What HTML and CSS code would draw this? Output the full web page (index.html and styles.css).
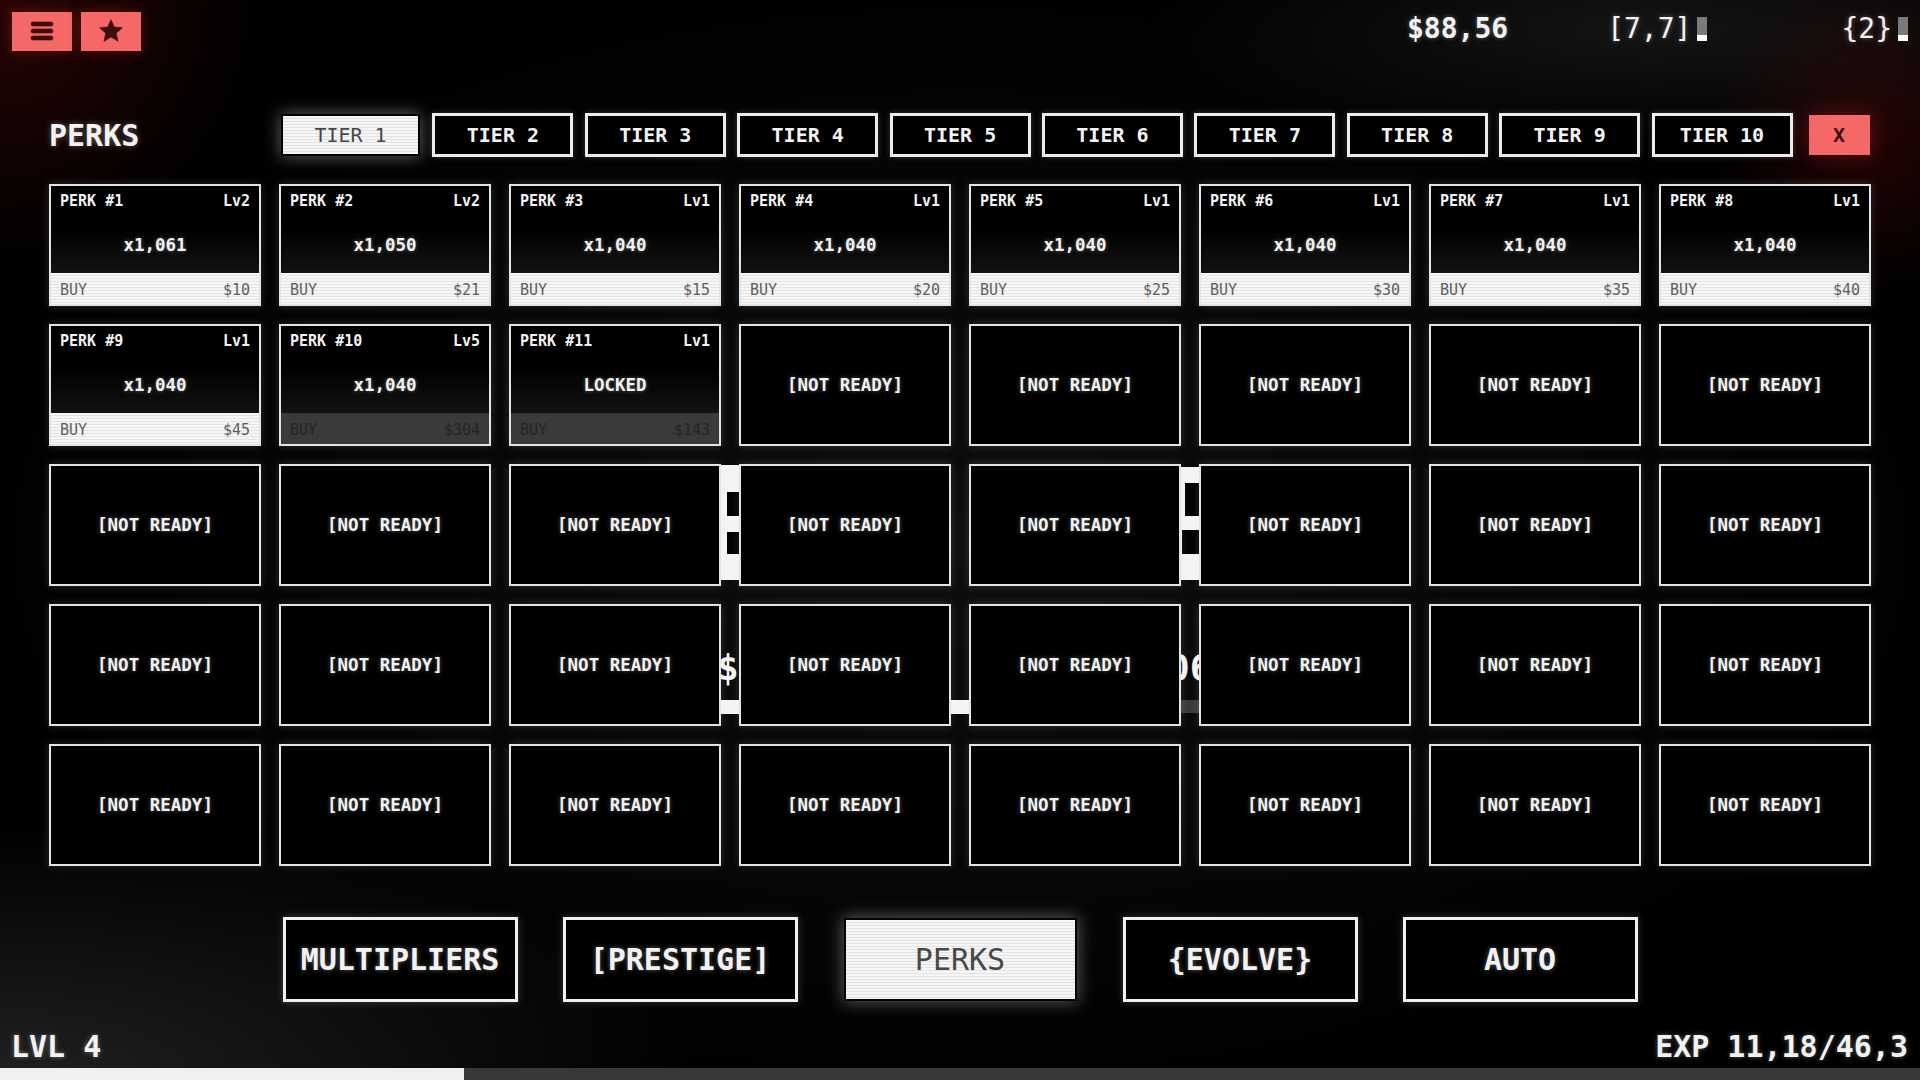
FILE: index.html
```html
<!doctype html>
<html lang="en">
<head>
  <meta charset="UTF-8">
  <title>Perks</title>
  <link rel="stylesheet" href="styles.css">
</head>
<body>
<div class="top">
  <a href="#" class="red-btn">
    <svg width="24" height="20" viewBox="0 0 24 20"><rect x="1" y="1" width="22" height="4" rx="2"/><rect x="1" y="8" width="22" height="4" rx="2"/><rect x="1" y="15" width="22" height="4" rx="2"/></svg>
  </a>
  <a href="#" class="red-btn">
    <svg width="26" height="26" viewBox="0 0 24 24"><polygon points="12,1.5 15,8.4 22.5,9.1 16.8,14 18.5,21.5 12,17.6 5.5,21.5 7.2,14 1.5,9.1 9,8.4" stroke-linejoin="round"/></svg>
  </a>
  <div class="stats">
    <span class="money">$88,56</span>
    <span class="pos">[7,7]<i class="caret"></i></span>
    <span class="ver">{2}<i class="caret"></i></span>
  </div>
</div>

<div class="head">
  <div class="title">PERKS</div>
  <div class="tabs">
    <a href="#" class="tab on">TIER 1</a>
    <a href="#" class="tab">TIER 2</a>
    <a href="#" class="tab">TIER 3</a>
    <a href="#" class="tab">TIER 4</a>
    <a href="#" class="tab">TIER 5</a>
    <a href="#" class="tab">TIER 6</a>
    <a href="#" class="tab">TIER 7</a>
    <a href="#" class="tab">TIER 8</a>
    <a href="#" class="tab">TIER 9</a>
    <a href="#" class="tab">TIER 10</a>
  </div>
  <a href="#" class="close">X</a>
</div>

<div class="grid-wrap">
  <!-- glitch leftovers of the previous frame showing between cards -->
  <div class="ghost g1"><i class="n1"></i><i class="n2"></i></div>
  <div class="ghost g2"><i class="n1"></i><i class="n2"></i></div>
  <div class="ghost-txt t1">$</div>
  <div class="ghost-txt t2">06</div>
  <div class="ghost b1"></div>
  <div class="ghost b2"></div>
  <div class="ghost b3"></div>

  <div class="grid">
    <div class="perk">
      <div class="perk-top"><span>PERK #1</span><span>Lv2</span></div>
      <div class="perk-val">x1,061</div>
      <div class="buy"><span>BUY</span><span>$10</span></div>
    </div>
    <div class="perk">
      <div class="perk-top"><span>PERK #2</span><span>Lv2</span></div>
      <div class="perk-val">x1,050</div>
      <div class="buy"><span>BUY</span><span>$21</span></div>
    </div>
    <div class="perk">
      <div class="perk-top"><span>PERK #3</span><span>Lv1</span></div>
      <div class="perk-val">x1,040</div>
      <div class="buy"><span>BUY</span><span>$15</span></div>
    </div>
    <div class="perk">
      <div class="perk-top"><span>PERK #4</span><span>Lv1</span></div>
      <div class="perk-val">x1,040</div>
      <div class="buy"><span>BUY</span><span>$20</span></div>
    </div>
    <div class="perk">
      <div class="perk-top"><span>PERK #5</span><span>Lv1</span></div>
      <div class="perk-val">x1,040</div>
      <div class="buy"><span>BUY</span><span>$25</span></div>
    </div>
    <div class="perk">
      <div class="perk-top"><span>PERK #6</span><span>Lv1</span></div>
      <div class="perk-val">x1,040</div>
      <div class="buy"><span>BUY</span><span>$30</span></div>
    </div>
    <div class="perk">
      <div class="perk-top"><span>PERK #7</span><span>Lv1</span></div>
      <div class="perk-val">x1,040</div>
      <div class="buy"><span>BUY</span><span>$35</span></div>
    </div>
    <div class="perk">
      <div class="perk-top"><span>PERK #8</span><span>Lv1</span></div>
      <div class="perk-val">x1,040</div>
      <div class="buy"><span>BUY</span><span>$40</span></div>
    </div>

    <div class="perk">
      <div class="perk-top"><span>PERK #9</span><span>Lv1</span></div>
      <div class="perk-val">x1,040</div>
      <div class="buy"><span>BUY</span><span>$45</span></div>
    </div>
    <div class="perk">
      <div class="perk-top"><span>PERK #10</span><span>Lv5</span></div>
      <div class="perk-val">x1,040</div>
      <div class="buy off"><span>BUY</span><span>$304</span></div>
    </div>
    <div class="perk">
      <div class="perk-top"><span>PERK #11</span><span>Lv1</span></div>
      <div class="perk-val">LOCKED</div>
      <div class="buy off"><span>BUY</span><span>$143</span></div>
    </div>
    <div class="perk empty">[NOT READY]</div>
    <div class="perk empty">[NOT READY]</div>
    <div class="perk empty">[NOT READY]</div>
    <div class="perk empty">[NOT READY]</div>
    <div class="perk empty">[NOT READY]</div>

    <div class="perk empty">[NOT READY]</div>
    <div class="perk empty">[NOT READY]</div>
    <div class="perk empty">[NOT READY]</div>
    <div class="perk empty">[NOT READY]</div>
    <div class="perk empty">[NOT READY]</div>
    <div class="perk empty">[NOT READY]</div>
    <div class="perk empty">[NOT READY]</div>
    <div class="perk empty">[NOT READY]</div>

    <div class="perk empty">[NOT READY]</div>
    <div class="perk empty">[NOT READY]</div>
    <div class="perk empty">[NOT READY]</div>
    <div class="perk empty">[NOT READY]</div>
    <div class="perk empty">[NOT READY]</div>
    <div class="perk empty">[NOT READY]</div>
    <div class="perk empty">[NOT READY]</div>
    <div class="perk empty">[NOT READY]</div>

    <div class="perk empty">[NOT READY]</div>
    <div class="perk empty">[NOT READY]</div>
    <div class="perk empty">[NOT READY]</div>
    <div class="perk empty">[NOT READY]</div>
    <div class="perk empty">[NOT READY]</div>
    <div class="perk empty">[NOT READY]</div>
    <div class="perk empty">[NOT READY]</div>
    <div class="perk empty">[NOT READY]</div>
  </div>
</div>

<div class="nav">
  <a href="#" class="nav-btn">MULTIPLIERS</a>
  <a href="#" class="nav-btn">[PRESTIGE]</a>
  <a href="#" class="nav-btn on">PERKS</a>
  <a href="#" class="nav-btn">{EVOLVE}</a>
  <a href="#" class="nav-btn">AUTO</a>
</div>

<div class="foot">
  <span>LVL 4</span>
  <span>EXP 11,18/46,3</span>
</div>
<div class="bar"><span style="width:24.15%"></span></div>
</body>
</html>
```

FILE: styles.css
```css
body {
  margin: 0;
  width: 1920px;
  height: 1080px;
  overflow: hidden;
  display: flex;
  flex-direction: column;
  font-family: "DejaVu Sans Mono", "Liberation Mono", monospace;
  color: #f2f2f2;
  background:
    radial-gradient(circle at 0 0, rgba(90, 10, 10, 0.45), transparent 260px),
    radial-gradient(circle at 1870px 135px, rgba(80, 8, 8, 0.45), transparent 160px),
    radial-gradient(ellipse 700px 260px at 0 100%, rgba(70, 70, 70, 0.45), transparent),
    radial-gradient(ellipse 500px 120px at 1650px 30px, rgba(40, 40, 40, 0.5), transparent),
    radial-gradient(ellipse at 50% 50%, #0e0e0e, #000 75%);
}
a {
  color: inherit;
  text-decoration: none;
}

/* top bar */
.top {
  height: 62px;
  display: flex;
  align-items: center;
  padding: 0 12px;
  box-sizing: border-box;
}
.red-btn {
  width: 60px;
  height: 39px;
  margin-right: 9px;
  background: #f46868;
  display: flex;
  align-items: center;
  justify-content: center;
  box-shadow: 0 0 14px rgba(255, 60, 60, 0.3);
}
.red-btn svg {
  fill: #3f0c0c;
  stroke: #3f0c0c;
  stroke-width: 0.6;
}
.stats {
  margin-left: auto;
  margin-bottom: 6px;
  display: flex;
  align-items: center;
  font-size: 28px;
  text-shadow: 0 0 5px rgba(255, 255, 255, 0.35);
}
.money {
  font-weight: bold;
}
.pos {
  margin-left: 99px;
}
.ver {
  margin-left: 134px;
}
.caret {
  display: inline-block;
  width: 10px;
  height: 24px;
  margin-left: 6px;
  vertical-align: -3px;
  background: linear-gradient(#7a7a7a 74%, #fff 74%);
}

/* header with tiers */
.head {
  display: flex;
  align-items: center;
  height: 44px;
  margin-top: 51px;
  padding: 0 49px;
}
.title {
  width: 231px;
  font-size: 30px;
  font-weight: bold;
  text-shadow: 0 0 6px rgba(255, 255, 255, 0.35);
}
.tabs {
  display: flex;
  gap: 11.4px;
}
.tab {
  width: 141px;
  height: 44px;
  box-sizing: border-box;
  border: 3px solid #ececec;
  background: #000;
  display: flex;
  align-items: center;
  justify-content: center;
  font-size: 20px;
  font-weight: bold;
  box-shadow: 0 0 6px rgba(255, 255, 255, 0.2);
}
.tab.on,
.nav-btn.on {
  border-color: transparent;
  background-clip: padding-box;
  background-color: #f4f4f4;
  background-image: repeating-linear-gradient(#f6f6f6 0 2px, #e2e2e2 2px 3px);
  color: #484848;
  font-weight: normal;
  box-shadow: 0 0 16px rgba(255, 255, 255, 0.35);
}
.close {
  margin-left: 16px;
  width: 61px;
  height: 40px;
  background: #f46868;
  color: #3f0c0c;
  font-size: 20px;
  font-weight: bold;
  display: flex;
  align-items: center;
  justify-content: center;
  box-shadow: 0 0 22px rgba(255, 60, 60, 0.3);
}

/* perk grid */
.grid-wrap {
  position: relative;
  margin: 27px 49px 0;
}
.grid {
  position: relative;
  z-index: 1;
  display: grid;
  grid-template-columns: repeat(8, 212px);
  grid-auto-rows: 122px;
  gap: 18px;
}
.perk {
  box-sizing: border-box;
  border: 2px solid #e4e4e4;
  display: flex;
  flex-direction: column;
  background: linear-gradient(#000 35%, #1f1f1f);
  box-shadow: 0 0 9px rgba(255, 255, 255, 0.16);
}
.perk-top {
  display: flex;
  justify-content: space-between;
  padding: 6px 9px 0;
  font-size: 15px;
  line-height: 18px;
  font-weight: bold;
}
.perk-val {
  margin-top: 24px;
  text-align: center;
  font-size: 17.5px;
  line-height: 22px;
  font-weight: bold;
  text-shadow: 0 0 4px rgba(255, 255, 255, 0.35);
}
.buy {
  margin-top: auto;
  height: 31px;
  padding: 3px 9px 0;
  box-sizing: border-box;
  display: flex;
  align-items: center;
  justify-content: space-between;
  font-size: 15px;
  color: #5e5e5e;
  background: repeating-linear-gradient(#f6f6f6 0 2px, #e4e4e4 2px 3px);
}
.buy.off {
  color: #242424;
  background: #3a3a3a;
}
.perk.empty {
  align-items: center;
  justify-content: center;
  background: #000;
  font-size: 17.5px;
  font-weight: bold;
  text-shadow: 0 0 4px rgba(255, 255, 255, 0.35);
}

.ghost {
  position: absolute;
  background: #f4f4f4;
}
.ghost i {
  position: absolute;
  background: #000;
}
.g1 {
  left: 668px;
  top: 281px;
  width: 26px;
  height: 115px;
}
.g1 .n1 {
  left: 10px;
  top: 27px;
  width: 16px;
  height: 24px;
}
.g1 .n2 {
  left: 10px;
  top: 67px;
  width: 16px;
  height: 22px;
}
.g2 {
  left: 1129px;
  top: 283px;
  width: 26px;
  height: 113px;
}
.g2 .n1 {
  left: 7px;
  top: 16px;
  width: 19px;
  height: 33px;
}
.g2 .n2 {
  left: 4px;
  top: 63px;
  width: 22px;
  height: 24px;
}
.ghost-txt {
  position: absolute;
  top: 462px;
  font-size: 36px;
  font-weight: bold;
  line-height: 44px;
  color: #f4f4f4;
}
.t1 {
  left: 668px;
}
.t2 {
  left: 1119px;
}
.b1 {
  left: 670px;
  top: 516px;
  width: 22px;
  height: 14px;
}
.b2 {
  left: 900px;
  top: 516px;
  width: 22px;
  height: 14px;
}
.b3 {
  left: 1131px;
  top: 516px;
  width: 22px;
  height: 13px;
  background: #3a3a3a;
}

/* bottom navigation */
.nav {
  display: flex;
  justify-content: center;
  gap: 45px;
  margin-top: 51px;
}
.nav-btn {
  width: 235px;
  height: 85px;
  box-sizing: border-box;
  border: 3px solid #f0f0f0;
  background: #000;
  display: flex;
  align-items: center;
  justify-content: center;
  font-size: 30px;
  font-weight: bold;
  text-shadow: 0 0 5px rgba(255, 255, 255, 0.35);
  box-shadow: 0 0 8px rgba(255, 255, 255, 0.2);
}
.nav-btn.on {
  text-shadow: none;
}

.foot {
  margin-top: auto;
  height: 44px;
  padding: 0 12px 0 11px;
  display: flex;
  align-items: center;
  justify-content: space-between;
  font-size: 30px;
  font-weight: bold;
  text-shadow: 0 0 5px rgba(255, 255, 255, 0.35);
}
.bar {
  height: 12px;
  background: #383838;
}
.bar span {
  display: block;
  height: 100%;
  background: #efefef;
}
```
